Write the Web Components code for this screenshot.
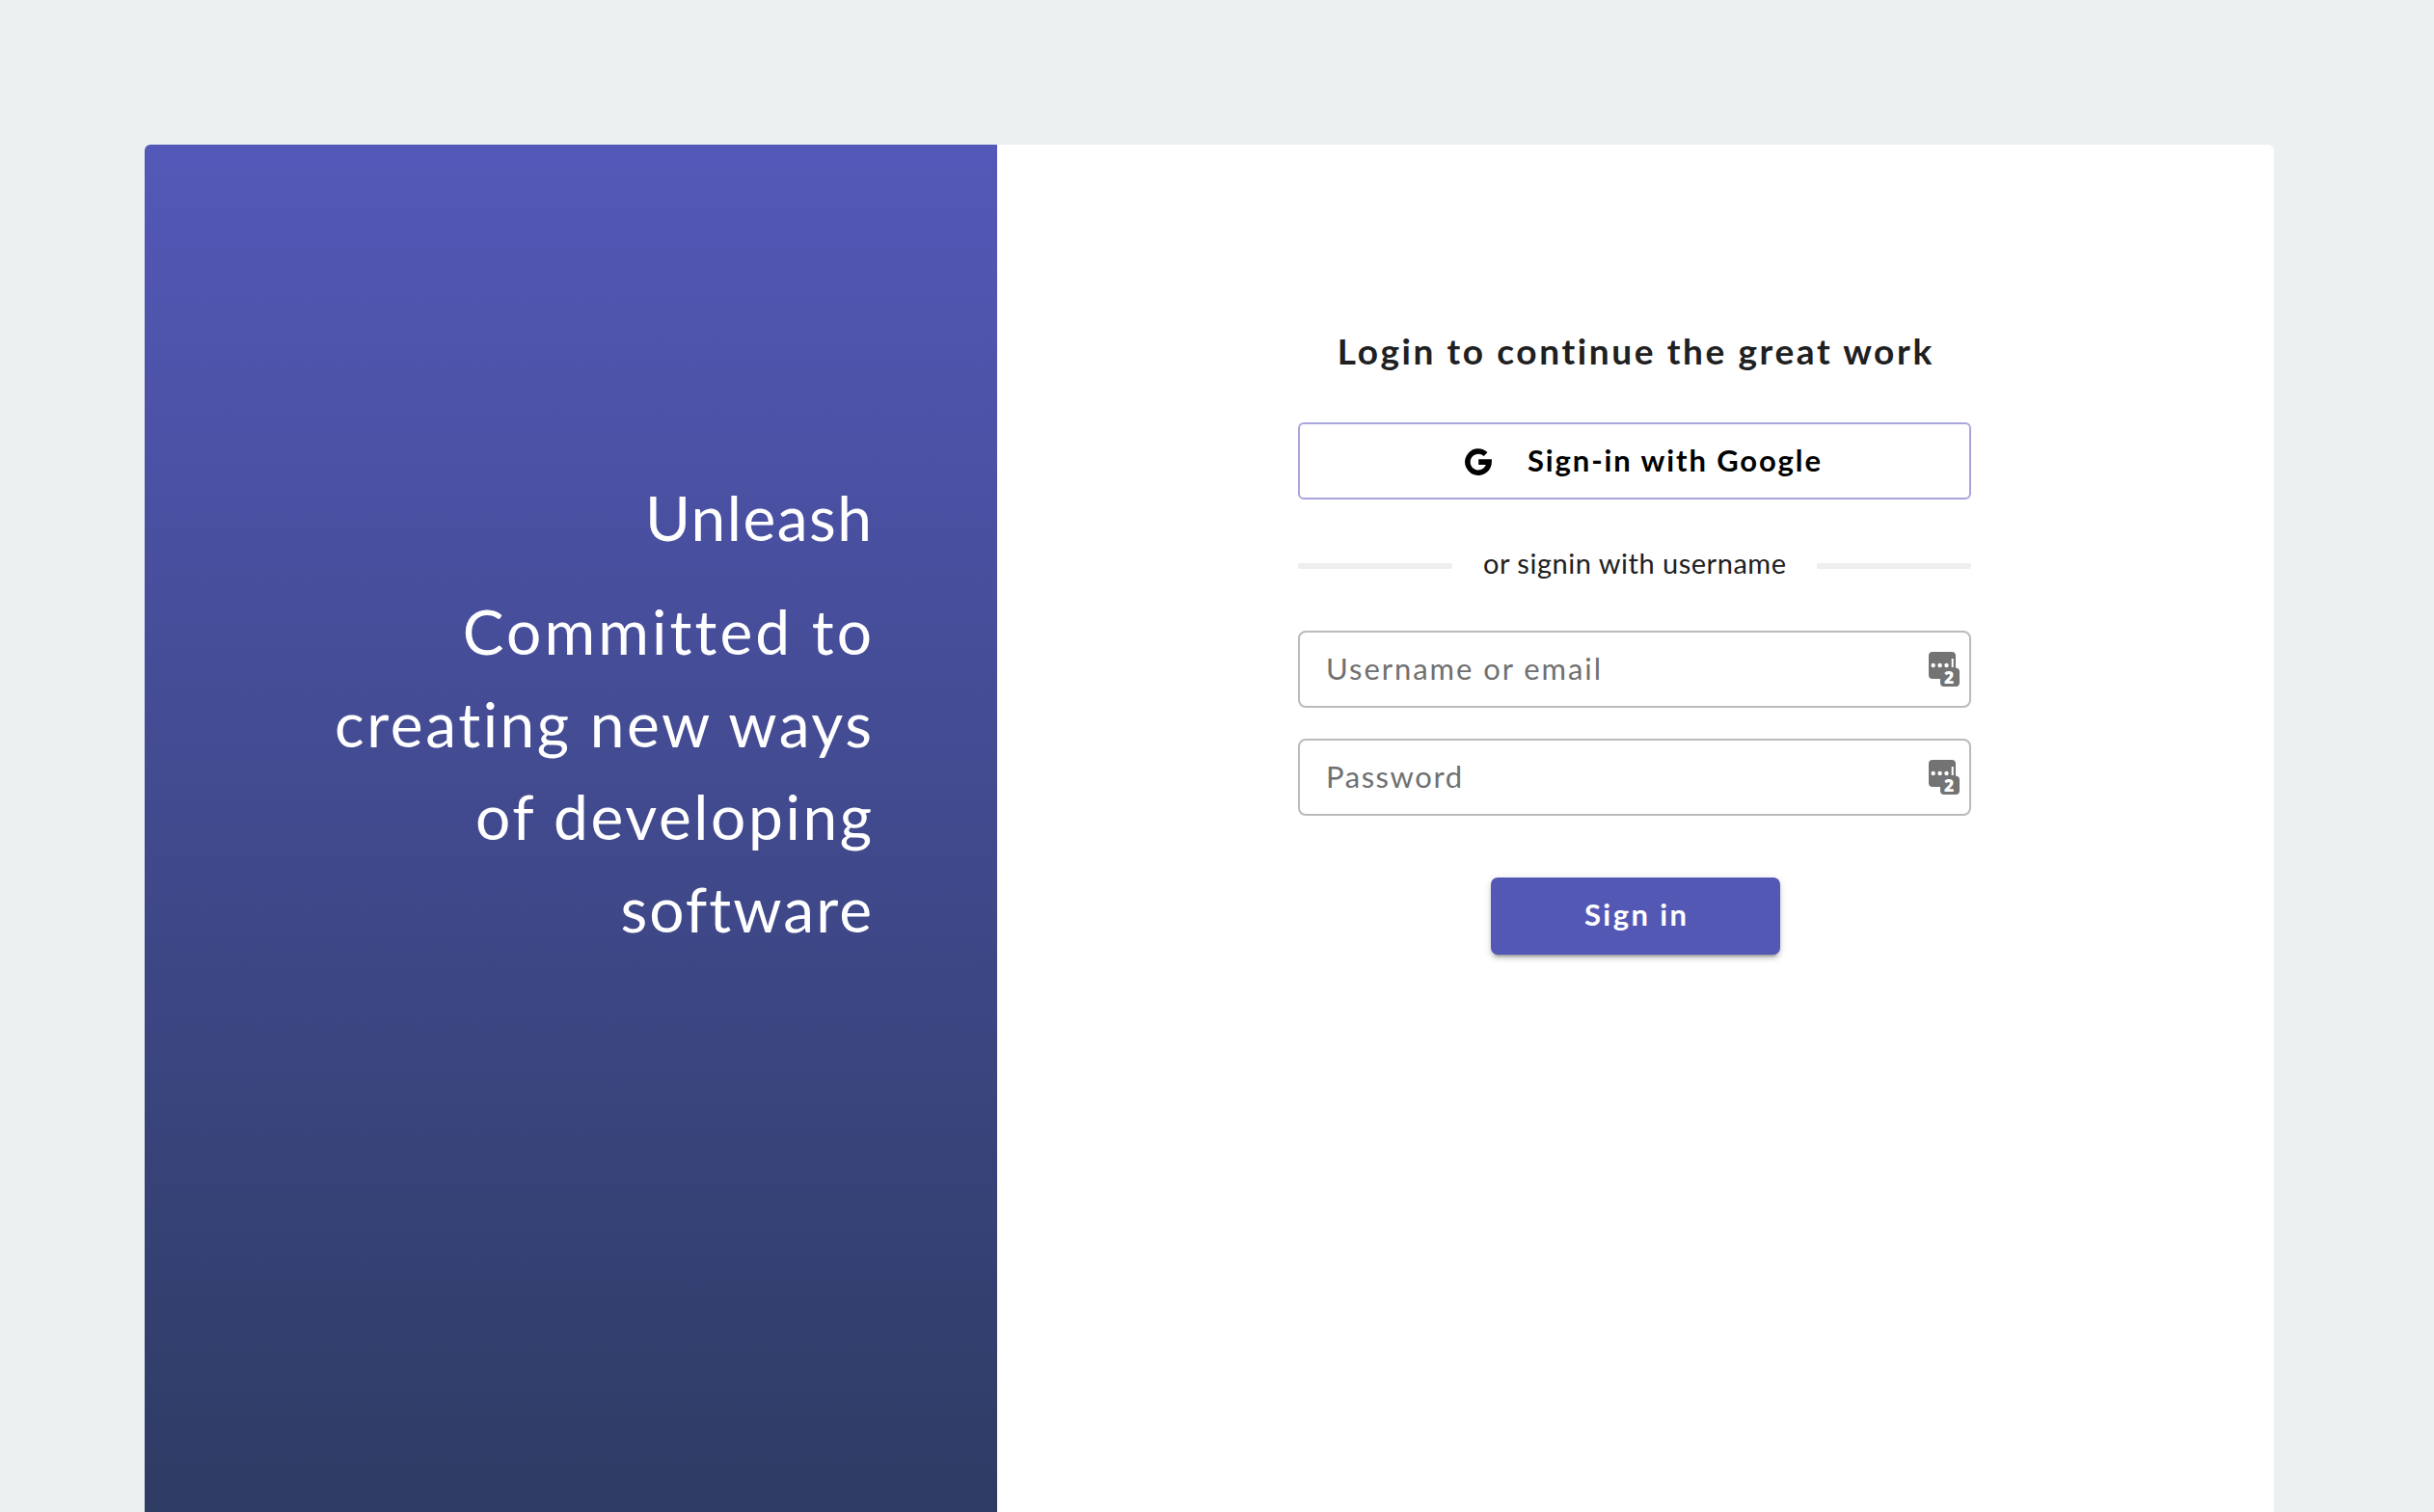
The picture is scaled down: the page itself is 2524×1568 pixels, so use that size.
<!DOCTYPE html>
<html lang="en">
<head>
<meta charset="utf-8">
<title>Unleash</title>
<style>
html,body{margin:0;height:100%;overflow:hidden;background:#ebf0f1}
body{font-family:Lato,"Open Sans",sans-serif;color:#202021}
</style>
</head>
<body>
<login-page></login-page>
<script>
// Spreads one line of text over a given width through letter spacing.
class FitText extends HTMLElement{
  connectedCallback(){
    const w=+this.getAttribute('width');
    const root=this.attachShadow({mode:'open'});
    root.innerHTML='<style>:host{display:block;white-space:nowrap;width:max-content}span{display:inline-block;font-kerning:normal}</style><span><slot></slot></span>';
    const span=root.querySelector('span'),n=this.textContent.length;
    const ls=(w-span.getBoundingClientRect().width)/(n-1);
    span.style.letterSpacing=ls+'px';
    span.style.marginRight=-ls+'px';
  }
}
customElements.define('fit-text',FitText);

const define=(name,html)=>customElements.define(name,class extends HTMLElement{
  constructor(){super();this.attachShadow({mode:'open'}).innerHTML=html;}
});

define('brand-panel',`<style>
:host{display:flex;flex-direction:column;align-items:flex-end;box-sizing:border-box;width:884px;padding:339px 130px 0 0;color:#fff;border-radius:6px 0 0 0;background:linear-gradient(#5458b8,#2e3b63)}
h1,h2{margin:0;font-size:64px;line-height:96px;font-weight:400;display:flex;flex-direction:column;align-items:flex-end}
h1{margin-bottom:22px}
</style>
<h1><fit-text width="235">Unleash</fit-text></h1>
<h2><fit-text width="422">Committed to</fit-text><fit-text width="558">creating new ways</fit-text><fit-text width="411">of developing</fit-text><fit-text width="259">software</fit-text></h2>`);

define('google-button',`<style>
:host{display:block}
button{display:flex;align-items:center;box-sizing:border-box;width:100%;height:80px;padding:0 0 2px 171px;border:2px solid #a8a5dc;border-radius:6px;background:#fff;font:700 31px/74px Lato,sans-serif;color:#000}
svg{display:block;margin:4px 37px 0 0}
</style>
<button><svg width="28" height="28" viewBox="0 0 28 28"><path fill="none" stroke="#000" stroke-width="5.6" d="M21.6 6A11.1 11.1 0 1 0 25.1 14.1H14.2"/></svg><slot></slot></button>`);

define('text-divider',`<style>
:host{display:flex;align-items:center;justify-content:space-between;font-size:29px;line-height:40px}
i{width:160px;height:6px;background:#eee;border-radius:2px;margin-top:6px}
</style>
<i></i><slot></slot><i></i>`);

define('login-field',`<style>
:host{display:flex;align-items:center;justify-content:space-between;box-sizing:border-box;height:80px;padding:0 10px 0 27px;border:2px solid #bbb;border-radius:8px;background:#fff;color:#707070;font-size:31px;line-height:72px}
.label{padding-bottom:3px}
svg{display:block;overflow:visible}
</style>
<div class="label"><slot></slot></div>
<svg width="32" height="36" viewBox="0 0 32 36"><path fill="#737373" d="M4 0H24Q28 0 28 4V16.5Q32 17 32 20.5V32Q32 36 28 36H16Q12 36 12 32V28H4Q0 28 0 24V4Q0 0 4 0Z"/><g fill="#fff"><circle cx="4.7" cy="14" r="2.2"/><circle cx="11.6" cy="14" r="2.2"/><circle cx="18.5" cy="14" r="2.2"/><path d="M23.7 7H25.7V16H23.7Z"/><text x="16" y="33.2" font-family="Open Sans" font-weight="800" font-size="17.5">2</text></g></svg>`);

define('submit-button',`<style>
:host{display:flex;justify-content:center;padding-left:2px}
button{display:flex;justify-content:center;width:300px;height:80px;padding:0;border:0;border-radius:7px;background:#5458b5;color:#fff;font:700 31px/77px Lato,sans-serif;box-shadow:0 6px 2px -4px rgba(0,0,0,.2),0 4px 4px rgba(0,0,0,.14),0 2px 10px rgba(0,0,0,.12)}
</style>
<button><slot></slot></button>`);

define('login-form',`<style>
:host{display:flex;flex-direction:column;box-sizing:border-box;width:1324px;padding:189px 314px 0 312px;background:#fff;border-radius:0 6px 0 0}
h2{align-self:center;margin:0 0 49px;font-size:37px;line-height:50px;font-weight:700}
text-divider{margin:46px 0 50px}
login-field+login-field{margin-top:32px}
submit-button{margin-top:64px}
</style>
<h2><fit-text width="617">Login to continue the great work</fit-text></h2>
<google-button><fit-text width="304">Sign-in with Google</fit-text></google-button>
<text-divider><fit-text width="314">or signin with username</fit-text></text-divider>
<login-field><fit-text width="285">Username or email</fit-text></login-field>
<login-field><fit-text width="141">Password</fit-text></login-field>
<submit-button><fit-text width="106">Sign in</fit-text></submit-button>`);

define('login-page',`<style>
:host{display:flex;box-sizing:border-box;height:100vh;padding:150px 166px 0 150px;overflow:hidden}
</style>
<brand-panel></brand-panel><login-form></login-form>`);
</script>
</body>
</html>
